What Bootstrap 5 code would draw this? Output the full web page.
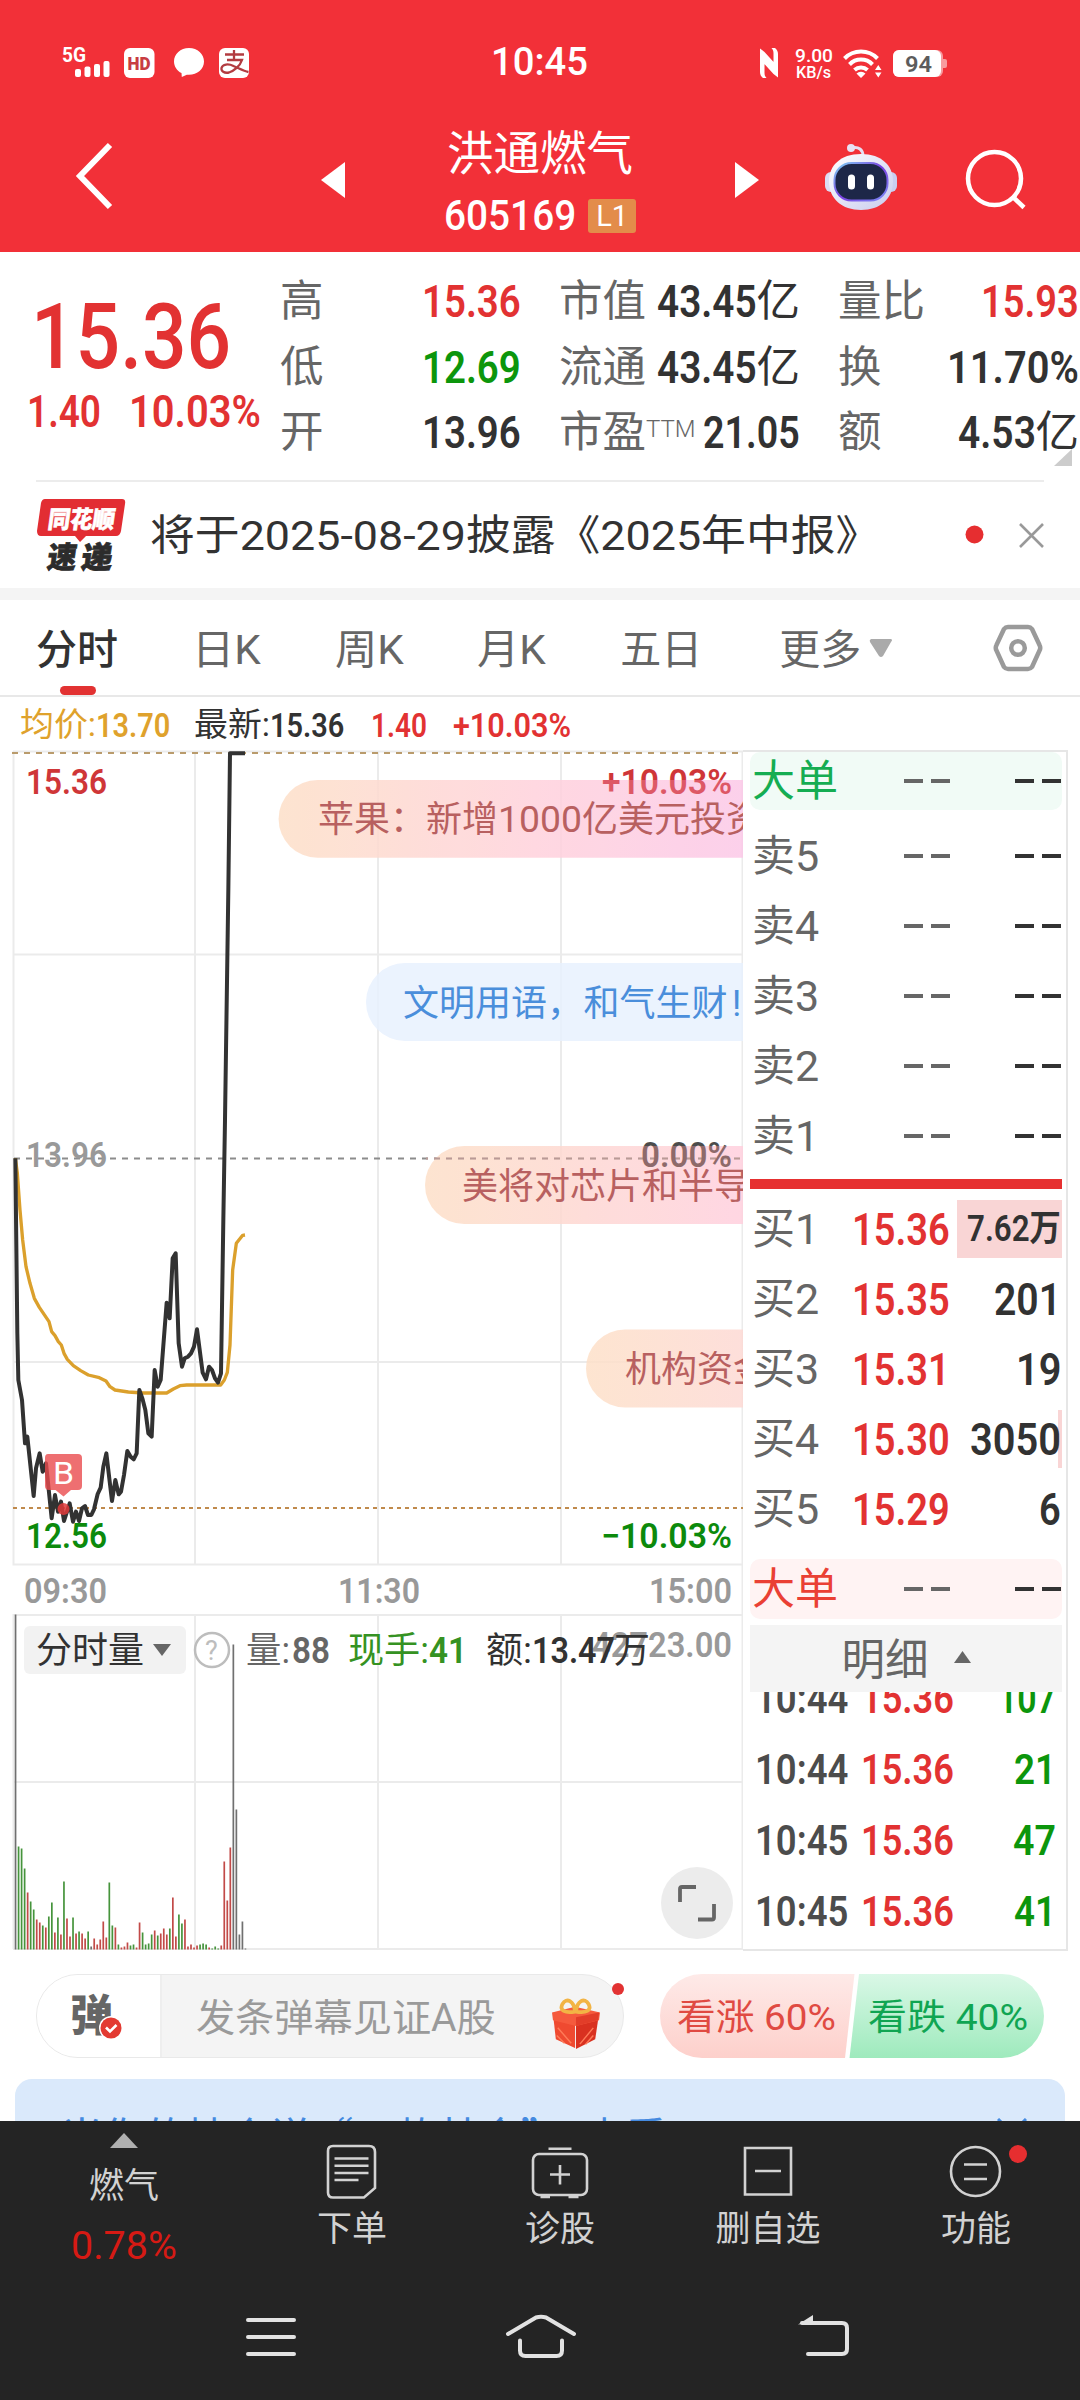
<!DOCTYPE html>
<html lang="zh-CN">
<head>
<meta charset="utf-8">
<meta name="viewport" content="width=device-width, initial-scale=1">
<title>洪通燃气 605169</title>
<link href="https://cdn.jsdelivr.net/npm/bootstrap@5.3.0/dist/css/bootstrap.min.css" rel="stylesheet">
<style>
  :root { --up:#e23232; --down:#0c960c; --ink:#323232; --mut:#666; }
  body { width:1080px; height:2400px; overflow:hidden; margin:0; background:#fff; color:var(--ink);
         font-family:Roboto,"Noto Sans CJK SC",sans-serif; line-height:1; }
  svg { display:block; flex:none; }
  svg text { font-family:Roboto,"Noto Sans CJK SC",sans-serif; }
  .fit { display:inline-block; white-space:nowrap; transform-origin:0 50%; flex:none; }
  .c-up { color:var(--up); } .c-down { color:var(--down); } .c-mut { color:var(--mut); }
  .num { font-size:45px; font-weight:600; }

  .app-head { height:252px; background:#f23038; color:#fff; }
  .status-row { height:125px; padding-left:60px; }
  .clock { margin-left:239px; font-size:39px; font-weight:500; width:95px; }
  .net-icons { margin-left:169px; }
  .title-row { height:126px; padding-left:72px; }
  .stock-title { width:390px; padding-top:3px; }
  .stock-name { font-size:46.5px; height:54px; line-height:52px; }
  .stock-code { font-size:42px; font-weight:500; height:34px; margin-top:17px; gap:12px; }
  .level-tag { background:#e38c4a; border-radius:3px; width:48px; height:34px; font-size:29px; font-weight:400; line-height:34px; }

  .quote { height:228px; padding:17px 0 0 0; }
  .quote-main { width:280px; }
  .big-price { font-size:91px; font-weight:500; padding-left:31px; height:136px; line-height:137px; }
  .quote-change { padding-left:27px; gap:28px; height:46px; margin-top:-17px; }
  .quote-col { width:241px; margin-right:38px; }
  .quote-row { height:65.5px; font-size:43.5px; }
  .ttm { font-size:24px; align-self:flex-start; margin-top:17px; font-weight:300; }
  .corner { right:8px; top:197px; }

  .news { height:108px; margin:0 36px; border-top:2px solid #ececec; }
  .news-text { font-size:41.5px; margin-left:24px; padding-top:2px; }
  .strip { height:12px; background:#f4f4f4; }

  .period-tabs { height:97px; border-bottom:2px solid #e8e8e8; padding-left:36px; gap:74px; }
  .period-tabs .nav-link { padding:0; font-size:41px; color:var(--mut); height:96px; line-height:101px; position:relative; }
  .period-tabs .nav-link.active { color:var(--ink); font-weight:500; }
  .period-tabs .nav-link.active::after { content:""; position:absolute; left:24px; bottom:1px; width:36px; height:9px; border-radius:5px; background:var(--up); }
  .legend-row { height:53px; padding:2px 0 0 20px; font-size:33px; }
  .legend-row .num { font-size:34px; }

  .book { width:325px; height:1201px; border:1px solid #e6e6e6; border-width:2px 2px 2px 0; padding:0 4px 0 7px; overflow:hidden; }
  .big-row { border-radius:10px; }
  .big-sell { height:58px; background:#f1fbf6; margin-bottom:11px; }
  .big-buy { height:60px; background:#fff3f3; margin-top:15px; }
  .book-row { height:70px; }
  .book-label { width:87px; padding-left:2px; font-size:43px; color:var(--mut); flex:none; white-space:nowrap; }
  .book-price { width:114px; text-align:right; padding-right:1px; flex:none; }
  .book-vol { height:58px; flex:1; padding-right:1px; }
  .dash { width:46px; height:4px; background:linear-gradient(90deg,currentColor 19px,transparent 19px 27px,currentColor 27px); }
  .split-bar { height:10px; background:#e63030; margin:8px 0 5px; }
  .vol-full { background:#f9d5d5; }
  .vol-edge { background:linear-gradient(90deg,transparent calc(100% - 4px),#f9d5d5 0); }
  .detail-head { height:67px; background:#f4f4f4; color:var(--mut); font-size:43.5px; margin-top:6px; gap:25px; padding:4px 0 0; }
  .ticks { height:256px; overflow:hidden; }
  .tick-list { margin-top:-29px; }
  .tick { height:71px; padding:0 6px 0 5px; color:#4c4c4c; }
  .tick .num { font-size:42px; }

  .barrage { height:106px; padding:23px 36px 0; }
  .input-pill { width:588px; height:84px; border:1px solid #e9e9e9; border-radius:42px; background:#f4f4f4; overflow:hidden; }
  .pill-left { width:125px; height:84px; background:#fff; border-right:2px solid #eee; padding-left:33px; }
  .dan { font-size:43px; font-weight:900; color:var(--mut); }
  .check-dot { left:62px; top:42px; }
  .hint { font-size:38px; color:#9a9a9a; margin-left:34px; padding-top:3px; }
  .gift { margin-left:56px; }
  .red-dot { width:12px; height:12px; left:576px; top:9px; background:var(--up); }
  .vote { font-size:36px; }
  .banner { margin:22px 15px 0; height:42px; border-radius:17px 17px 0 0; background:#dae9fb; overflow:hidden; color:#448ae0; font-family:"Noto Sans CJK SC",sans-serif; font-size:40px; padding:35px 38px 0 46px; }

  .dock { height:279px; background:#242424; color:#d2d2d2; }
  .dock-items { height:160px; }
  .dock-item { font-size:35px; }
  .dock-text { margin-top:9px; height:40px; line-height:40px; }
  .dock-first { width:248px; }
</style>
<script src="https://cdn.jsdelivr.net/npm/bootstrap@5.3.0/dist/js/bootstrap.bundle.min.js"></script>
</head>
<body>

<header class="app-head">
  <div class="status-row d-flex align-items-center">
    <svg width="192" height="36" viewBox="60 44 192 36" fill="#fff">
      <text x="62" y="60.500" font-size="20" font-weight="700" textLength="24" lengthAdjust="spacingAndGlyphs">5G</text>
      <rect x="75" y="68" width="6" height="8" rx="2"/><rect x="84.500" y="65.500" width="6" height="10.500" rx="2"/><rect x="94" y="63" width="6" height="13" rx="2"/><rect x="103.500" y="60" width="6" height="16" rx="2"/>
      <rect x="124" y="47" width="30.500" height="30" rx="6"/>
      <text x="127.500" y="69" font-size="19" font-weight="900" fill="#c83c42" textLength="23" lengthAdjust="spacingAndGlyphs">HD</text>
      <path d="M189 47c-8.500 0-15 6-15 13.500 0 5 3 9.300 7.500 11.600l.3 3.900 5-2.300c9.600 1 17.200-5 17.200-13.200C204 53 197.500 47 189 47z"/>
      <rect x="219" y="47" width="30" height="30" rx="6"/>
      <g fill="none" stroke="#b23b40" stroke-width="2.300"><path d="M234 49v9M225 53.500h19M227 59h15c-2 6-8 11-13 12.500-5 1-8-1.500-7.500-4.500 1-4 7-4.500 12-2 5 2 10 5 15 6"/></g>
    </svg>
    <div class="clock"><span class="fit" data-w="97">10:45</span></div>
    <svg class="net-icons" width="195" height="36" viewBox="755 44 195 36" fill="#fff">
      <path d="M762.500 76V50.500L776 72V48.500M762 50l1 0M775.500 75.500V50" fill="none"/>
      <path d="M760 47.500l4.500 3.500 10 11v6.500L764.500 58v13.500c0 2.500.5 4 2 5.500h-3.500c-2-1.500-3-3.500-3-6zM778 76.500l-4.500-3.500-10-11v-6.500L773.500 66V52.500c0-2.500-.5-4-2-5.500h3.500c2 1.500 3 3.500 3 6z"/>
      <text x="795" y="61" font-size="18.500" font-weight="500" textLength="38" lengthAdjust="spacingAndGlyphs">9.00</text>
      <text x="796" y="77" font-size="16" font-weight="500" textLength="35" lengthAdjust="spacingAndGlyphs">KB/s</text>
      <g fill="none" stroke="#fff" stroke-width="4"><path d="M844.500 57.500a23 23 0 0 1 33 0M849.500 63.500a16 16 0 0 1 23 0M854.500 69a9.500 9.500 0 0 1 13 0"/></g>
      <path d="M856.500 72.500a6.500 6.500 0 0 1 9 0L861 77zM875 69h6.500l-3.200-5zM875 71.500h6.500l-3.200 5z"/>
      <rect x="893" y="49" width="50" height="27" rx="6" fill="#f89a9e"/><rect x="941" y="58" width="6" height="9" rx="2" fill="#f89a9e"/>
      <rect x="893" y="49" width="48" height="27" rx="6"/>
      <text x="905" y="70.500" font-size="22" font-weight="600" fill="#5c5c5c" textLength="27" lengthAdjust="spacingAndGlyphs">94</text>
    </svg>
  </div>
  <div class="title-row d-flex">
    <svg width="44" height="80" viewBox="72 135 44 80" class="mt-2"><path d="M110 145 80 176l30 31" fill="none" stroke="#fff" stroke-width="6" transform="translate(0 2)"/></svg>
    <svg width="24" height="36" viewBox="0 0 24 36" style="margin:37px 0 0 205px"><path d="M24 0v36L0 18z" fill="#fff"/></svg>
    <div class="stock-title text-center">
      <div class="stock-name">洪通燃气</div>
      <div class="stock-code d-flex justify-content-center align-items-center"><span class="fit" data-w="132">605169</span><span class="level-tag">L1</span></div>
    </div>
    <svg width="24" height="36" viewBox="0 0 24 36" style="margin-top:37px"><path d="M0 0v36l24-18z" fill="#fff"/></svg>
    <svg width="76" height="72" viewBox="823 141 76 72" style="margin:16px 0 0 64px">
      <defs><linearGradient id="face" x1="0" y1="0" x2="1" y2="1"><stop offset="0" stop-color="#fff"/><stop offset="1" stop-color="#c9cbee"/></linearGradient>
      <linearGradient id="rim" x1="0" y1="0" x2="1" y2="1"><stop offset="0" stop-color="#7fd6f5"/><stop offset=".5" stop-color="#7a3fe0"/><stop offset="1" stop-color="#7b8cf5"/></linearGradient></defs>
      <path d="M851 148c8-2 12 2 12 8" fill="none" stroke="#e6dff2" stroke-width="3"/><circle cx="851" cy="148" r="4" fill="#e8e2f4"/>
      <rect x="825" y="172" width="14" height="20" rx="6" fill="#dcdcf4"/><rect x="883" y="172" width="14" height="20" rx="6" fill="#c9cdf0"/>
      <path d="M861 154c21 0 32 12 32 27 0 18-13 29-32 29s-32-11-32-29c0-15 11-27 32-27z" fill="url(#face)"/>
      <rect x="834.500" y="163" width="53" height="37.500" rx="17" fill="#1d2748" stroke="url(#rim)" stroke-width="2"/>
      <rect x="848" y="174.500" width="7" height="15" rx="3.500" fill="#fff"/><rect x="867" y="174.500" width="7" height="15" rx="3.500" fill="#fff"/>
    </svg>
    <svg width="64" height="64" viewBox="964 148 64 64" style="margin:23px 0 0 65px"><g fill="none" stroke="#fff" stroke-width="4.500"><ellipse cx="994.500" cy="178.500" rx="26.500" ry="26.500"/><path d="m1013 197 11 10.500"/></g></svg>
  </div>
</header>

<section class="quote d-flex position-relative">
  <div class="quote-main">
    <div class="big-price c-up"><span class="fit" data-w="200">15.36</span></div>
    <div class="quote-change num c-up d-flex align-items-center"><span class="fit" data-w="74">1.40</span><span class="fit" data-w="132">10.03%</span></div>
  </div>
  <div class="quote-col">
    <div class="quote-row d-flex justify-content-between align-items-center"><span class="c-mut">高</span><span class="fit num c-up" data-w="99">15.36</span></div>
    <div class="quote-row d-flex justify-content-between align-items-center"><span class="c-mut">低</span><span class="fit num c-down" data-w="99">12.69</span></div>
    <div class="quote-row d-flex justify-content-between align-items-center"><span class="c-mut">开</span><span class="fit num" data-w="99">13.96</span></div>
  </div>
  <div class="quote-col">
    <div class="quote-row d-flex justify-content-between align-items-center"><span class="c-mut">市值</span><span class="d-flex align-items-center"><span class="fit num" data-w="100">43.45</span>亿</span></div>
    <div class="quote-row d-flex justify-content-between align-items-center"><span class="c-mut">流通</span><span class="d-flex align-items-center"><span class="fit num" data-w="100">43.45</span>亿</span></div>
    <div class="quote-row d-flex align-items-center"><span class="c-mut">市盈</span><span class="ttm c-mut">TTM</span><span class="fit num ms-auto" data-w="97">21.05</span></div>
  </div>
  <div class="quote-col me-0">
    <div class="quote-row d-flex justify-content-between align-items-center"><span class="c-mut">量比</span><span class="fit num c-up" data-w="98">15.93</span></div>
    <div class="quote-row d-flex justify-content-between align-items-center"><span class="c-mut">换</span><span class="fit num" data-w="132">11.70%</span></div>
    <div class="quote-row d-flex justify-content-between align-items-center"><span class="c-mut">额</span><span class="d-flex align-items-center"><span class="fit num" data-w="78">4.53</span>亿</span></div>
  </div>
  <svg class="corner position-absolute" width="18" height="17"><path d="M18 0v17H0z" fill="#ccc"/></svg>
</section>

<section class="news d-flex align-items-center">
  <svg width="90" height="76" viewBox="36 496 90 76">
    <path d="M45 498h77q4 0 3 5l-4 27q-1 5-5 5H86l-6 6-5-6H41q-4 0-4-5l4-28q1-4 4-4z" fill="#e22d33"/>
    <g font-weight="900" transform="skewX(-8)"><text x="121" y="527" font-size="24" fill="#fff" stroke="#fff" stroke-width=".6" textLength="67" lengthAdjust="spacingAndGlyphs">同花顺</text>
    <g fill="#2c2c2c" stroke="#2c2c2c" stroke-width=".8"><text x="126" y="567" font-size="30" textLength="29" lengthAdjust="spacingAndGlyphs">速</text><text x="160" y="567" font-size="30" textLength="31" lengthAdjust="spacingAndGlyphs">递</text></g></g>
  </svg>
  <span class="news-text"><span class="fit" data-w="730">将于2025-08-29披露《2025年中报》</span></span>
  <svg width="80" height="30" viewBox="965 519 80 30" class="ms-auto"><circle cx="975.500" cy="533.500" r="9" fill="#e62e30"/><path d="m1021 523 23 23m0-23-23 23" stroke="#999" stroke-width="2.600" fill="none"/></svg>
</section>
<div class="strip"></div>

<nav class="nav period-tabs flex-nowrap">
  <a class="nav-link active">分时</a><a class="nav-link"><span class="fit" data-w="69">日K</span></a><a class="nav-link"><span class="fit" data-w="69">周K</span></a><a class="nav-link"><span class="fit" data-w="69">月K</span></a><a class="nav-link">五日</a>
  <a class="nav-link" style="margin-left:3px">更多</a>
  <svg width="24" height="20" viewBox="0 0 24 20" style="margin:38px 0 0 -66px"><path d="M2 1h20q2 1 0 3L14 18q-2 2-4 0L1 4Q0 2 2 1z" fill="#aaa"/></svg>
  <svg width="50" height="48" viewBox="0 0 50 48" style="margin:24px 0 0 26px"><path d="M15 3h20q2.500 0 4 2l7.500 16q1.500 3 0 5.500L39 43q-1.500 2-4 2H15q-2.500 0-4-2L3.500 26.500q-1.500-2.500 0-5.500L11 5q1.500-2 4-2z" fill="none" stroke="#9a9a9a" stroke-width="4.500"/><circle cx="25" cy="24" r="6.800" fill="none" stroke="#9a9a9a" stroke-width="4.500"/></svg>
</nav>
<div class="legend-row d-flex align-items-center">
  <span class="fit" data-w="76" style="color:#dfa22c">均价:</span><span class="fit num" data-w="74" style="color:#dfa22c">13.70</span>
  <span class="fit ms-4" data-w="76">最新:</span><span class="fit num" data-w="74">15.36</span>
  <span class="fit num c-up" data-w="56" style="margin-left:26px">1.40</span><span class="fit num c-up" data-w="118" style="margin-left:26px">+10.03%</span>
</div>

<main class="d-flex">
  <svg width="743" height="1201" viewBox="0 750 743 1201">
    <defs>
      <linearGradient id="pinkA" gradientUnits="userSpaceOnUse" x1="279" x2="744" y1="0" y2="0"><stop offset="0" stop-color="#fde0c8"/><stop offset=".55" stop-color="#ffd2dc"/><stop offset="1" stop-color="#fcc8e8"/></linearGradient>
      <linearGradient id="pinkB" gradientUnits="userSpaceOnUse" x1="425" x2="744" y1="0" y2="0"><stop offset="0" stop-color="#fde0c8"/><stop offset="1" stop-color="#ffd0de"/></linearGradient>
      <linearGradient id="pinkC" gradientUnits="userSpaceOnUse" x1="586" x2="744" y1="0" y2="0"><stop offset="0" stop-color="#fde0c8"/><stop offset="1" stop-color="#fdd9d4"/></linearGradient>
      <linearGradient id="rise" gradientUnits="userSpaceOnUse" x1="0" x2="0" y1="760" y2="800"><stop offset=".5" stop-color="#cf3638"/><stop offset=".5" stop-color="#dd5866"/></linearGradient>
      <linearGradient id="flat" gradientUnits="userSpaceOnUse" x1="0" x2="0" y1="1126" y2="1166"><stop offset=".5" stop-color="#4c4c4c"/><stop offset=".5" stop-color="#8e6a6a"/></linearGradient>
    </defs>
    <g stroke="#ebebeb" stroke-width="2" fill="none">
      <path d="M13.500 751V1565.500M195 751V1565.500M378 751V1565.500M561 751V1565.500M742.500 751V1949M13 751.500H743M13 954.500H743M13 1362H743M13 1564.500H743"/>
      <path d="M13.500 1614V1949M195 1614V1949M378 1614V1949M561 1614V1949M13 1615H743M13 1782H743M13 1949H743"/>
    </g>
    <path d="M12 753H743" stroke="#b99b6c" stroke-width="2" stroke-dasharray="6 6"/>
    <path d="M14 1158.500H743" stroke="#8c8c8c" stroke-width="1.800" stroke-dasharray="6 6"/>
    <path d="M13 1508H743" stroke="#c08a4c" stroke-width="1.800" stroke-dasharray="4 4"/>
    <g font-size="35.500" font-weight="600">
      <text x="26" y="794" fill="#cf3638" textLength="81" lengthAdjust="spacingAndGlyphs">15.36</text>
      <text x="26" y="1167" fill="#999" textLength="81" lengthAdjust="spacingAndGlyphs">13.96</text>
      <text x="26" y="1548" fill="#0c8a0c" textLength="81" lengthAdjust="spacingAndGlyphs">12.56</text>
      <text x="601" y="1548" fill="#0c8a0c" textLength="131" lengthAdjust="spacingAndGlyphs">−10.03%</text>
      <g fill="#999"><text x="24" y="1603" textLength="83" lengthAdjust="spacingAndGlyphs">09:30</text><text x="338" y="1603" textLength="82" lengthAdjust="spacingAndGlyphs">11:30</text><text x="649" y="1603" textLength="83" lengthAdjust="spacingAndGlyphs">15:00</text>
      <text x="592" y="1657" textLength="140" lengthAdjust="spacingAndGlyphs">42723.00</text></g>
    </g>
    <g transform="translate(0 1120) scale(.33333)" fill="none" stroke-linejoin="round">
      <polyline stroke="#dba02c" stroke-width="10" points="46,115 52,160 60,270 68,360 78,440 90,490 103,535 118,562 147,605 155,635 165,647 175,665 184,675 192,700 202,718 220,737 242,752 265,765 298,773 318,783 330,800 345,810 385,816 430,819 500,819 520,807 540,797 560,795 662,795 673,780 682,757 690,675 698,450 709,370 728,346 735,345"/>
      <polyline stroke="#323232" stroke-width="12" points="46,115 52,640 55,780 66,840 75,970 82,950 101,1128 108,1045 119,1000 128,1055 138,1030 155,1195 165,1125 174,1175 183,1145 192,1203 209,1150 219,1205 228,1175 237,1203 246,1165 255,1158 264,1185 274,1185 282,1168 293,1122 302,1103 310,1040 319,1000 336,1143 346,1080 356,1123 363,1115 372,1065 382,993 392,1010 401,1018 410,1000 418,810 427,835 436,870 445,940 455,950 464,750 473,800 482,780 500,548 509,595 518,415 527,400 536,670 546,740 554,715 564,710 573,700 582,680 591,628 608,758 618,778 627,740 636,750 645,775 654,788 663,760 670,300 675,0 685,-690 690,-1100 735,-1100"/>
    </g>
    <circle cx="63.500" cy="1509" r="6" fill="#e23a3a" opacity=".85"/>
    <path d="M48 1454h30q4 0 4 4v28q0 4-4 4h-7l-7.500 6.500-8-6.500H49q-4 0-4-4v-28q0-4 3-4z" fill="#ea4b4d" opacity=".8"/>
    <text x="53" y="1484" font-size="32" fill="#fff" textLength="21" lengthAdjust="spacingAndGlyphs">B</text>
    <g opacity=".85">
      <path d="M744 780H317.500a38.900 38.900 0 0 0 0 77.800H744z" fill="url(#pinkA)"/>
      <path d="M744 963H405a39 39 0 0 0 0 78H744z" fill="#e8f1fe"/>
      <path d="M744 1146H464a39 39 0 0 0 0 78H744z" fill="url(#pinkB)"/>
      <path d="M744 1329.500H625a39 39 0 0 0 0 78H744z" fill="url(#pinkC)"/>
    </g>
    <path d="M426 1158.500H743" stroke="#b99a96" stroke-width="1.800" stroke-dasharray="6 6" stroke-dashoffset="4"/>
    <g font-size="35.500" font-weight="600">
      <text x="602" y="794" fill="url(#rise)" textLength="130" lengthAdjust="spacingAndGlyphs">+10.03%</text>
      <text x="641" y="1167" fill="url(#flat)" textLength="91" lengthAdjust="spacingAndGlyphs">0.00%</text>
    </g>
    <g font-size="36" fill="#b86060">
      <text x="318" y="832">苹果：<tspan x="426">新增</tspan><tspan x="498" textLength="84" lengthAdjust="spacingAndGlyphs">1000</tspan><tspan x="582">亿美元投资</tspan></text>
      <text x="403" y="1015.500" fill="#4a8edb">文明用语，<tspan x="583.500">和气生财</tspan><tspan x="732">!</tspan></text>
      <text x="462" y="1199">美将对芯片和半导</text>
      <text x="625" y="1381.500">机构资金</text>
    </g>
    <g id="volume"></g>
    <rect x="24" y="1626" width="162" height="48" rx="6" fill="#f2f2f2"/>
    <g font-size="36"><text x="36" y="1663" fill="#323232">分时量</text><path d="M153 1644h18l-9 12z" fill="#666"/>
      <circle cx="212" cy="1650" r="17" fill="none" stroke="#bdbdbd" stroke-width="2.500"/><text x="205" y="1660" font-size="27" fill="#bdbdbd">?</text>
      <text x="246" y="1663" fill="#666" textLength="44" lengthAdjust="spacingAndGlyphs">量:</text><text x="292" y="1663" fill="#666" font-weight="600" textLength="38" lengthAdjust="spacingAndGlyphs">88</text>
      <g fill="#359222"><text x="348" y="1663" textLength="81" lengthAdjust="spacingAndGlyphs">现手:</text><text x="429" y="1663" font-weight="600" textLength="38" lengthAdjust="spacingAndGlyphs">41</text></g>
      <g fill="#323232"><text x="486" y="1663" textLength="46" lengthAdjust="spacingAndGlyphs">额:</text><text x="532" y="1663" font-weight="600" textLength="83" lengthAdjust="spacingAndGlyphs">13.47</text><text x="614" y="1663">万</text></g>
    </g>
    <circle cx="697" cy="1903" r="36" fill="#ececec"/>
    <path d="M680 1902v-13q0-2 2-2h14M698 1919.500h14q2 0 2-2V1904" fill="none" stroke="#666" stroke-width="3.800"/>
  </svg>

  <aside class="book">
    <div class="big-row big-sell d-flex align-items-center"><span class="book-label" style="color:#15ad52">大单</span><span class="book-price"><i class="dash d-block ms-auto c-mut"></i></span><span class="book-vol d-flex justify-content-end align-items-center"><i class="dash"></i></span></div>
    <div id="asks"></div>
    <div class="split-bar"></div>
    <div id="bids"></div>
    <div class="big-row big-buy d-flex align-items-center"><span class="book-label" style="color:#ea4034">大单</span><span class="book-price"><i class="dash d-block ms-auto c-mut"></i></span><span class="book-vol d-flex justify-content-end align-items-center"><i class="dash"></i></span></div>
    <div class="detail-head d-flex align-items-center justify-content-center">明细<svg width="17" height="12" style="margin-top:-7px"><path d="M8.500 0 17 12H0z" fill="#666"/></svg></div>
    <div class="ticks"><div class="tick-list" id="ticks"></div></div>
  </aside>
</main>

<section class="barrage d-flex justify-content-between position-relative">
  <div class="position-relative">
    <div class="input-pill d-flex align-items-center">
      <div class="pill-left d-flex align-items-center position-relative"><span class="dan">弹</span>
        <svg class="check-dot position-absolute" width="24" height="24" viewBox="0 0 24 24"><circle cx="12" cy="12" r="12" fill="#fff"/><circle cx="12" cy="12" r="10.500" fill="#e33a32"/><path d="m7 11.500 4 4 6.500-6.500" fill="none" stroke="#fff" stroke-width="2.600"/></svg>
      </div>
      <span class="hint"><span class="fit" data-w="300">发条弹幕见证A股</span></span>
      <svg class="gift mt-3" width="48" height="52" viewBox="0 0 50 54">
        <path d="M1 16 24 22v30L4 43z" fill="#ef4a30"/><path d="M49 16 25 22v31l20-10z" fill="#d93120"/>
        <path d="m0 15 24-6 26 6-1 8-24 6L1 23z" fill="#f55a3d"/><path d="m25 20 24-5-1 8-23 6z" fill="#e23d29"/>
        <path d="m6 31 14 16M5 39l8 8M29 48l14-17M35 48l8-9" stroke="#ff7a58" stroke-width="1.500"/>
        <g fill="none" stroke="#f2b445" stroke-width="4"><path d="M24 14C14 16 7 13 11 6s12-3 13 8zM25 14c10 2 17-1 13-8s-12-3-13 8z"/></g>
      </svg>
    </div>
    <span class="red-dot position-absolute rounded-circle"></span>
  </div>
  <svg class="vote" width="384" height="84" viewBox="660 1974 384 84">
    <defs><linearGradient id="vr" x1="0" y1="0" x2="0" y2="1"><stop offset="0" stop-color="#feeae8"/><stop offset="1" stop-color="#fdd0cb"/></linearGradient><linearGradient id="vg" x1="0" y1="0" x2="0" y2="1"><stop offset="0" stop-color="#daf8e7"/><stop offset="1" stop-color="#9eeabd"/></linearGradient></defs>
    <path d="M702 1974h152.500l-9.500 84H702a42 42 0 0 1 0-84z" fill="url(#vr)"/><path d="M859 1974h143a42 42 0 0 1 0 84H849.500z" fill="url(#vg)"/>
    <text x="677" y="2029.500" fill="#e04a42" textLength="159" lengthAdjust="spacingAndGlyphs">看涨 60%</text><text x="868" y="2029.500" fill="#10a552" textLength="160" lengthAdjust="spacingAndGlyphs">看跌 40%</text>
  </svg>
</section>
<div class="banner d-flex justify-content-between"><span class="fit" data-w="606">当你的持仓说“三款基金”，查看</span><svg width="30" height="30" viewBox="0 0 30 30" class="mt-1"><path d="m1 1 28 28m0-28L1 29" stroke="#448ae0" stroke-width="3"/></svg></div>

<footer class="dock">
  <div class="dock-items d-flex">
    <div class="dock-first dock-item text-center">
      <svg class="mx-auto" width="28" height="27" viewBox="0 0 28 27"><path d="M14 12 28 27H0z" fill="#b0b0b0"/></svg>
      <div style="margin-top:19px;height:40px;line-height:40px">燃气</div>
      <div style="font-size:38px;color:#d61a14;margin-top:19px;height:40px;line-height:40px"><span class="fit" data-w="106">0.78%</span></div>
    </div>
    <div class="dock-item text-center" style="width:208px">
      <svg class="mx-auto" style="margin-top:22px" width="54" height="58" viewBox="326 2143 54 58"><g fill="none" stroke="#d2d2d2" stroke-width="2.600"><path d="M334 2146h36q6 0 6 6v36l-11 9.500h-31q-5 0-5-5V2151q0-5 5-5z"/><path d="M335.500 2158.500h34M335.500 2165.800h34M335.500 2173h34M335.500 2180h24"/></g></svg>
      <div class="dock-text">下单</div>
    </div>
    <div class="dock-item text-center" style="width:208px">
      <svg class="mx-auto" style="margin-top:22px" width="62" height="58" viewBox="528.500 2143 62 58"><g fill="none" stroke="#d2d2d2" stroke-width="2.600"><rect x="532.500" y="2154" width="54" height="41" rx="6"/><path d="M548 2148.700h23M559.500 2165v19.500M549.500 2174.500h20M540 2197h9.500M568 2197h10"/></g></svg>
      <div class="dock-text">诊股</div>
    </div>
    <div class="dock-item text-center" style="width:208px">
      <svg class="mx-auto" style="margin-top:22px" width="54" height="58" viewBox="740 2143 54 58"><g fill="none" stroke="#d2d2d2" stroke-width="2.600"><path d="M744 2148h46v46.500h-46zM754 2171h26"/></g></svg>
      <div class="dock-text">删自选</div>
    </div>
    <div class="dock-item text-center" style="width:208px">
      <svg class="mx-auto" style="margin-top:22px" width="106" height="58" viewBox="923 2143 106 58"><g fill="none" stroke="#d2d2d2" stroke-width="2.600"><circle cx="975.500" cy="2171.500" r="24.500"/><path d="M964 2164.500h23M964 2179h23"/></g><circle cx="1018" cy="2154" r="9" fill="#e62e30"/></svg>
      <div class="dock-text">功能</div>
    </div>
  </div>
  <svg width="1080" height="119" viewBox="0 2281 1080 119"><g fill="none" stroke="#e2e2e2" stroke-width="4" stroke-linecap="round" stroke-linejoin="round"><path d="M248 2320h46M248 2337h46M248 2354h46"/><path d="m508 2334 28-16.500q5-1.500 10 0l28 16.500M520 2340.500v10q0 5.500 5.500 5.500h31q5.500 0 5.500-5.500v-10"/><path d="M802 2323h40q5 0 5 5v21q0 5-5 5h-34"/></g><path d="m798 2324.500 15-9.500v8z" fill="#e2e2e2"/></svg>
</footer>

<script>
  // Sell and buy levels
  const dash = '<i class="dash d-block ms-auto"></i>';
  document.getElementById('asks').innerHTML = [5,4,3,2,1].map(n =>
    `<div class="book-row d-flex align-items-center"><span class="book-label">卖${n}</span><span class="book-price c-mut">${dash}</span><span class="book-vol d-flex justify-content-end align-items-center">${dash}</span></div>`).join('');
  const bids = [['15.36','7.62万',94,'vol-full',36],['15.35','201',67,'',45],['15.31','19',45,'',45],['15.30','3050',91,'vol-edge',45],['15.29','6',22,'',45]];
  document.getElementById('bids').innerHTML = bids.map((b, i) =>
    `<div class="book-row d-flex align-items-center"><span class="book-label">买${i+1}</span><span class="book-price c-up"><span class="fit num" data-w="98">${b[0]}</span></span><span class="book-vol d-flex justify-content-end align-items-center ${b[3]}" style="margin-left:6px"><span class="fit num" style="font-size:${b[4]}px" data-w="${b[2]}">${b[1]}</span></span></div>`).join('');
  // Latest trades
  document.getElementById('ticks').innerHTML = [['10:44','107',58],['10:44','21',42],['10:45','47',43],['10:45','41',42]].map(t =>
    `<div class="tick d-flex align-items-center"><span class="fit num" data-w="93">${t[0]}</span><span class="fit num c-up" style="margin-left:13px" data-w="93">15.36</span><span class="fit num c-down ms-auto" data-w="${t[2]}">${t[1]}</span></div>`).join('');
  // Volume per minute: height and direction (g falling, r rising, k flat)
  const vol = 'k335 g103 g101 g81 r57 g48 g40 r30 r27 g24 r22 g33 g47 r17 g32 r15 g68 r31 r13 g32 r16 g18 r16 r11 g18 k3 r11 r5 r10 r28 r12 g67 g24 r22 g5 r2 r3 r7 g4 g5 r2 r27 g17 g5 g6 g15 r19 g14 r16 r21 r15 g21 r52 r13 g35 g26 r30 r3 r5 r2 r4 g5 g6 g5 r2 g1 g3 g1 r4 r88 r49 r102 k305 k140 k15 k28 k1'.split(' ');
  const tone = { g:'#46943c', r:'#c24a48', k:'#707070' };
  document.getElementById('volume').innerHTML = vol.map((v, i) => {
    const h = +v.slice(1);
    return `<rect x="${(14.7 + i * 3.025).toFixed(2)}" y="${1949.5 - h}" width="1.700" height="${h}" fill="${tone[v[0]]}"/>`;
  }).join('');
  // Condense numerals to their column width
  document.querySelectorAll('.fit').forEach(el => {
    const natural = el.offsetWidth, want = +el.dataset.w;
    el.style.transform = `scaleX(${want / natural})`;
    el.style.marginRight = (want - natural) + 'px';
  });
</script>
</body>
</html>
